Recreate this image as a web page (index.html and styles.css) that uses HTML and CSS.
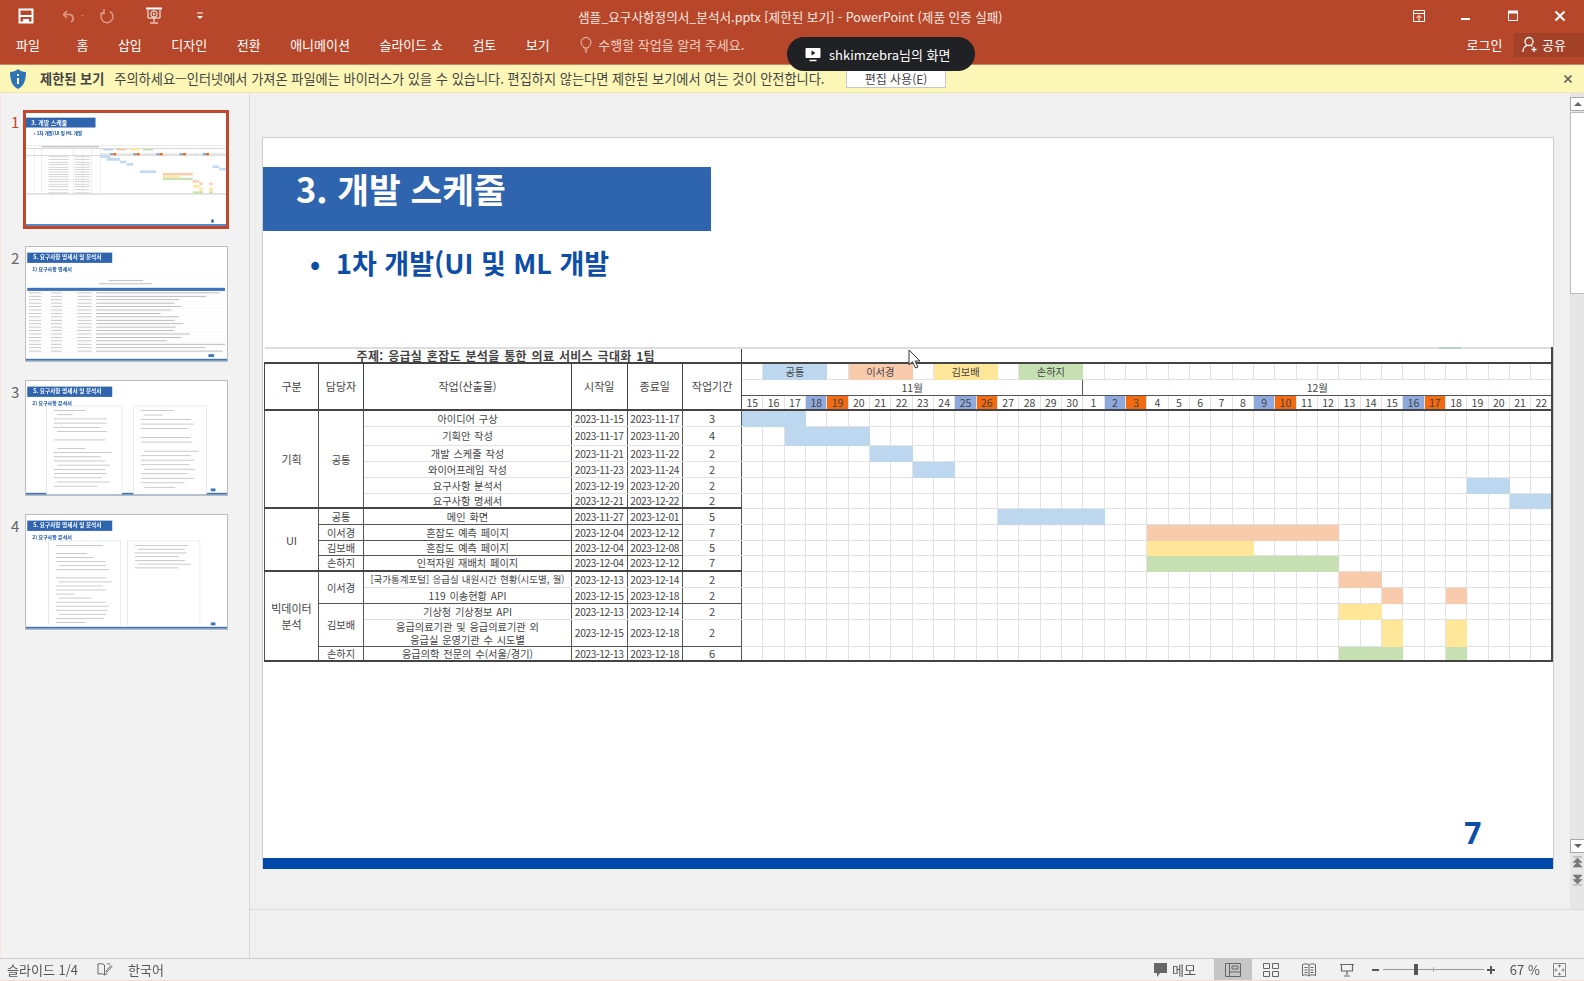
FILE: index.html
```html
<!DOCTYPE html>
<html lang="ko">
<head>
<meta charset="UTF-8">
<title>샘플_요구사항정의서_분석서.pptx</title>
<link rel="stylesheet" href="styles.css">
</head>
<body>
<div class="app">
    <header class="ribbon">
        <div class="title-bar">
            <div class="quick-tools">
                <svg class="qt-save" width="16" height="16" viewBox="0 0 16 16"><path d="M1.500 1.500h13v13h-13z" fill="none" stroke="#fff" stroke-width="2"/><path d="M2 8h12" stroke="#fff" stroke-width="2"/><path d="M5 11h6v3H5z" fill="#fff"/></svg>
                <svg class="qt-undo" width="26" height="16" viewBox="0 0 26 16"><path d="M5 3 1.500 6.500 5 10M2 6.500h6a4 4 0 0 1 1 7.500" fill="none" stroke="#dd9a85" stroke-width="1.600"/><path d="m19 7 3 0-1.500 2z" fill="#cf8068"/></svg>
                <svg class="qt-redo" width="16" height="16" viewBox="0 0 16 16"><path d="M11 3.500A6 6 0 1 1 5 3.500M5 1v4.500H1" fill="none" stroke="#dd9a85" stroke-width="1.500"/></svg>
                <svg class="qt-show" width="18" height="18" viewBox="0 0 18 18"><path d="M1 1.500h16" stroke="#fff" stroke-width="2"/><path d="M3 3v8h12V3" fill="none" stroke="#fff"/><circle cx="9" cy="7" r="3.200" fill="none" stroke="#fff"/><path d="m8 5.500 2.500 1.500L8 8.500z" fill="#fff"/><path d="M9 11v4M5 16h8" stroke="#fff"/></svg>
                <svg class="qt-more" width="8" height="8" viewBox="0 0 8 8"><path d="M1 1h6" stroke="#fff"/><path d="M1 4h6L4 7z" fill="#fff"/></svg>
            </div>
            <div class="doc-title">샘플_요구사항정의서_분석서.pptx [제한된 보기] - PowerPoint (제품 인증 실패)</div>
            <div class="win-tools">
                <svg width="14" height="14" viewBox="0 0 14 14"><path d="M1.500 1.500h11v11h-11zM1.500 4.500h11" fill="none" stroke="#fff"/><path d="M7 12V6.500M4.500 9 7 6.500 9.500 9" fill="none" stroke="#fff"/></svg>
                <svg width="14" height="14" viewBox="0 0 14 14"><path d="M2 10h9" stroke="#fff" stroke-width="2"/></svg>
                <svg width="14" height="14" viewBox="0 0 14 14"><path d="M2.500 2.500h9v9h-9z" fill="none" stroke="#fff"/><path d="M2 3h10" stroke="#fff" stroke-width="3"/></svg>
                <svg width="14" height="14" viewBox="0 0 14 14"><path d="m2.500 2.500 9 9M11.500 2.500l-9 9" stroke="#fff" stroke-width="2"/></svg>
            </div>
        </div>
        <nav class="tab-bar">
            <span class="tab tab-file">파일</span>
            <span class="tab">홈</span>
            <span class="tab">삽입</span>
            <span class="tab">디자인</span>
            <span class="tab">전환</span>
            <span class="tab">애니메이션</span>
            <span class="tab">슬라이드 쇼</span>
            <span class="tab">검토</span>
            <span class="tab">보기</span>
            <span class="tell-me">
                <svg width="12" height="16" viewBox="0 0 12 16"><path d="M4 11C3.500 9 1 8 1 5.500a5 5 0 0 1 10 0C11 8 8.500 9 8 11zM4.500 13h3M5 15h2" fill="none" stroke="#f0cfc4"/></svg>
                수행할 작업을 알려 주세요.
            </span>
            <span class="login">로그인</span>
            <span class="share">
                <svg width="16" height="17" viewBox="0 0 16 17"><circle cx="7" cy="5.500" r="4" fill="none" stroke="#fff" stroke-width="1.300"/><path d="M1 16c0-4 2-6 4-6.500M9 9.500l1.500 1" fill="none" stroke="#fff" stroke-width="1.300"/><path d="M12 11v5M9.500 13.500h5" stroke="#fff" stroke-width="1.300"/></svg>
                공유
            </span>
        </nav>
    </header>

    <div class="message-bar">
        <svg class="shield" width="18" height="22" viewBox="0 0 18 22"><path d="M9 1c2 2 5 3 8 3 0 8-2 14-8 17C3 18 1 12 1 4c3 0 6-1 8-3z" fill="#2f74b5"/><path d="M9 6v1.800M9 10v6" stroke="#fff" stroke-width="2"/></svg>
        <strong class="msg-title">제한된 보기</strong>
        <span class="msg-text">주의하세요—인터넷에서 가져온 파일에는 바이러스가 있을 수 있습니다. 편집하지 않는다면 제한된 보기에서 여는 것이 안전합니다.</span>
        <button class="msg-button">편집 사용(E)</button>
        <svg class="msg-close" width="10" height="10" viewBox="0 0 10 10"><path d="m1.500 1.500 7 7M8.500 1.500l-7 7" stroke="#555" stroke-width="1.600"/></svg>
    </div>

    <main class="workspace">
        <aside class="thumbs">
            <div class="thumb thumb-active"><span class="thumb-no">1</span><div class="thumb-frame" id="thumb1"></div></div>
            <div class="thumb"><span class="thumb-no">2</span><div class="thumb-frame" id="thumb2"></div></div>
            <div class="thumb"><span class="thumb-no">3</span><div class="thumb-frame" id="thumb3"></div></div>
            <div class="thumb"><span class="thumb-no">4</span><div class="thumb-frame" id="thumb4"></div></div>
        </aside>
        <section class="editor">
            <div class="slide-area">
                <div class="slide-scroll">
                    <article class="slide">
                        <h1 class="slide-title">3. 개발 스케줄</h1>
                        <p class="slide-bullet"><span class="bullet-dot">•</span>1차 개발(UI 및 ML 개발</p>
                        <table class="gantt">
                            <colgroup id="gantt-cols"></colgroup>
                            <thead id="gantt-head"></thead>
                            <tbody id="gantt-body"></tbody>
                        </table>
                        <div class="page-no">7</div>
                        <div class="slide-foot"></div>
                    </article>
                </div>
                <div class="scrollbar">
                    <span class="sb-btn"><i class="tri-up"></i></span>
                    <span class="sb-thumb"></span>
                    <span class="sb-track"></span>
                    <span class="sb-btn sb-down"><i class="tri-down"></i></span>
                    <svg class="sb-page" width="11" height="12" viewBox="0 0 11 12"><path d="M1 1h9M5.500 2 1 6.500h9zM5.500 6 1 11h9z" fill="#777" stroke="#777" stroke-width=".6"/></svg>
                    <svg class="sb-page" width="11" height="12" viewBox="0 0 11 12"><path d="M1 11h9M5.500 10 1 5.500h9zM5.500 6 1 1h9z" fill="#777" stroke="#777" stroke-width=".6"/></svg>
                </div>
            </div>
            <div class="notes-strip"></div>
        </section>
    </main>

    <footer class="status-bar">
        <span class="st-slide">슬라이드 1/4</span>
        <svg class="st-check" width="16" height="15" viewBox="0 0 16 15"><path d="M7.500 3C6 1.500 3 1.500 1 2v10c2-.5 5-.5 6.500 1 .8-.8 2-1.200 3-1.300M7.500 3v10M10 2c1-.3 2-.3 3 0" fill="none" stroke="#666"/><path d="m9.500 8.500 4.500-5 1 1-4.500 5-1.500.5z" fill="none" stroke="#666"/></svg>
        <span class="st-lang">한국어</span>
        <svg class="st-memo" width="13" height="14" viewBox="0 0 13 14"><path d="M0 0h13v10H6l-3 4v-4H0z" fill="#666"/></svg>
        <span class="st-memo-text">메모</span>
        <span class="view-btn view-active"><svg width="16" height="14" viewBox="0 0 16 14"><path d="M.500.500h15v13H.500zM4.500.500v13M4.500 9h11" fill="none" stroke="#666"/><path d="M7 3h6v3H7z" fill="none" stroke="#666"/></svg></span>
        <span class="view-btn"><svg width="16" height="14" viewBox="0 0 16 14"><path d="M.500.500h6v5h-6zM9.500.500h6v5h-6zM.500 8.500h6v5h-6zM9.500 8.500h6v5h-6z" fill="none" stroke="#666"/></svg></span>
        <span class="view-btn"><svg width="14" height="14" viewBox="0 0 14 14"><path d="M.500 1.500C3 .500 5 .500 7 2c2-1.500 4-1.500 6.500-.500v11C11 11.500 9 11.500 7 13c-2-1.500-4-1.500-6.500-.500zM7 2v11M2.500 4.500h3M2.500 7h3M2.500 9.500h3M8.500 4.500h3M8.500 7h3M8.500 9.500h3" fill="none" stroke="#666"/></svg></span>
        <span class="view-btn"><svg width="14" height="14" viewBox="0 0 14 14"><path d="M0 1.500h14M1.500 2v6h11V2M7 8v4M4 13h6" fill="none" stroke="#666" stroke-width="1.200"/></svg></span>
        <div class="zoom-ctl">
            <span class="zoom-minus"></span>
            <div class="zoom-track"><span class="zoom-tick"></span><span class="zoom-handle"></span></div>
            <span class="zoom-plus"></span>
        </div>
        <span class="zoom-value">67 %</span>
        <svg class="st-fit" width="13" height="14" viewBox="0 0 13 14"><path d="M.500.500h12v13H.500z" fill="none" stroke="#888"/><path d="M6.500 2v2.500M5 3l1.500-1L8 3M6.500 12V9.500M5 11l1.500 1L8 11M2 7h2.500M3 5.500 2 7l1 1.500M11 7H8.500M10 5.500 11 7l-1 1.500" fill="none" stroke="#666" stroke-width=".8"/></svg>
    </footer>

    <div class="share-pill">
        <svg width="16" height="15" viewBox="0 0 16 15"><path d="M1.500 1h13a1 1 0 0 1 1 1v8a1 1 0 0 1-1 1h-13a1 1 0 0 1-1-1V2a1 1 0 0 1 1-1z" fill="#fff"/><path d="m6.500 3.500 4 2.500-4 2.500z" fill="#202124"/><path d="M4.500 13.500h7" stroke="#fff" stroke-width="1.500"/></svg>
        <span>shkimzebra님의 화면</span>
    </div>
    <svg class="pointer" width="14" height="20" viewBox="0 0 14 20"><path d="M1 1v15l3.500-3.200L7.500 19l2.500-1-3-6h5z" fill="#fff" stroke="#333"/></svg>
</div>
<script src="script.js"></script>
</body>
</html>
```

FILE: styles.css
```css
* {
    box-sizing: border-box;
}
html, body {
    margin: 0;
    padding: 0;
    height: 100%;
    overflow: hidden;
}
body {
    font-family: "Noto Sans CJK KR", "Noto Sans", sans-serif;
    color: #444;
    background-color: #f0f0f0;
}
.app {
    position: relative;
    display: flex;
    flex-direction: column;
    width: 1584px;
    height: 981px;
    filter: blur(0.4px);
}

/* ribbon */
.ribbon {
    height: 65px;
    background-color: #b7472a;
    color: #fff;
    border-bottom: 1px solid #c9836a;
}
.title-bar {
    position: relative;
    display: flex;
    align-items: center;
    height: 32px;
}
.quick-tools {
    display: flex;
    align-items: center;
    padding-left: 18px;
}
.qt-undo {
    margin-left: 28px;
}
.qt-redo {
    margin-left: 11px;
}
.qt-show {
    margin-left: 30px;
}
.qt-more {
    margin-left: 33px;
}
.doc-title {
    position: absolute;
    left: 578px;
    width: 424px;
    font-size: 12.600px;
    white-space: nowrap;
    color: #fbe9e3;
}
.win-tools {
    display: flex;
    gap: 33px;
    margin-left: auto;
    padding-right: 17px;
}
.tab-bar {
    display: flex;
    align-items: center;
    gap: 29.500px;
    height: 25px;
    padding-left: 16px;
    font-size: 13px;
}
.tab-file {
    margin-right: 7px;
}
.tell-me {
    display: flex;
    align-items: center;
    gap: 6px;
    margin-left: 1px;
    color: #f0cfc4;
}
.login {
    margin-left: auto;
}
.share {
    display: flex;
    align-items: center;
    gap: 4px;
    width: 70px;
    height: 24px;
    margin-left: -18px;
    padding-left: 8px;
    background-color: #a24128;
}

/* yellow message */
.message-bar {
    display: flex;
    align-items: center;
    height: 28px;
    padding-left: 9px;
    background-color: #fcf7b6;
    border-bottom: 1px solid #eee9a8;
    font-size: 13.200px;
    color: #444;
}
.msg-title {
    margin-left: 13px;
    font-weight: 700;
}
.msg-text {
    margin-left: 10px;
}
.msg-button {
    width: 100px;
    height: 19px;
    margin-left: auto;
    padding: 0;
    font-family: inherit;
    font-size: 12px;
    color: #444;
    background-color: #fff;
    border: 1px solid #c8c8c8;
}
.msg-close {
    margin-left: 617px;
    margin-right: 11px;
}

/* thumbnails */
.workspace {
    flex: 1;
    display: flex;
    min-height: 0;
}
.thumbs {
    display: flex;
    flex-direction: column;
    gap: 18px;
    width: 250px;
    padding: 17px 21px 0 0;
    background-color: #f2f2f2;
    border-left: 1px solid #f8e4de;
    border-right: 1px solid #d8d8d8;
}
.thumb {
    position: relative;
    display: flex;
    justify-content: flex-end;
    height: 116px;
}
.thumb-no {
    position: absolute;
    left: 10px;
    top: 1px;
    font-size: 15px;
    color: #666;
}
.thumb-frame {
    width: 203px;
    height: 116px;
    background-color: #fff;
    border: 1px solid #bcbcbc;
}
.thumb-frame svg {
    display: block;
    width: 100%;
    height: 100%;
    filter: blur(0.5px);
}
.thumb-active {
    height: 117px;
    margin-bottom: 1px;
}
.thumb-active .thumb-no {
    color: #c0492b;
}
.thumb-active .thumb-frame {
    width: 206px;
    height: 119px;
    margin-right: -1px;
    border: 3px solid #c0492b;
}

/* editor */
.editor {
    flex: 1;
    display: flex;
    flex-direction: column;
    min-width: 0;
}
.slide-area {
    flex: 1;
    display: flex;
    min-height: 0;
    background-color: #f0f0f0;
}
.slide-scroll {
    flex: 1;
    padding: 44px 16px 0 12px;
}
.slide {
    position: relative;
    display: flex;
    flex-direction: column;
    height: 732px;
    background-color: #fff;
    border: 1px solid #cfcfcf;
    border-bottom: 0;
}
.slide-title {
    display: flex;
    align-items: center;
    width: 448px;
    height: 64px;
    margin: 29px 0 0;
    padding: 0 0 22px 33px;
    font-size: 34.500px;
    line-height: 42px;
    font-weight: 700;
    color: #fff;
    background-color: #2f65ae;
}
.slide-bullet {
    margin: 13px 0 0 47px;
    font-size: 27px;
    line-height: 38px;
    font-weight: 700;
    color: #0d4ea6;
}
.bullet-dot {
    display: inline-block;
    width: 26px;
}
.page-no {
    align-self: flex-end;
    margin-top: auto;
    margin-right: 72px;
    font-family: "Open Sans", sans-serif;
    font-size: 30px;
    line-height: 40px;
    font-weight: 700;
    color: #0d4ea6;
}
.slide-foot {
    height: 11px;
    margin-top: 5px;
    background-color: #0048aa;
}

/* schedule table */
.sat {
    background-color: #8ea9db;
}
.sun {
    background-color: #f26a11;
}
.c-blue {
    background-color: #bdd7ee;
}
.c-orange {
    background-color: #f8cbad;
}
.c-yellow {
    background-color: #ffe699;
}
.c-green {
    background-color: #c6e0b4;
}
.gantt {
    table-layout: fixed;
    width: 1288px;
    margin: 65px 0 0 1px;
    border-collapse: collapse;
    font-size: 10.200px;
    word-spacing: 1px;
    color: #444;
}
.gantt th, .gantt td {
    padding: 0;
    overflow: hidden;
    text-align: center;
    font-weight: 400;
    white-space: nowrap;
    border: 1px solid #e2e2e2;
    line-height: 11px;
}
.gantt thead th {
    font-size: 11px;
}
.gantt .sheet-title {
    position: relative;
    height: 15px;
    padding-left: 6px;
    font-size: 12px;
    font-weight: 700;
    letter-spacing: .3px;
    border: 0;
    border-top: 2px solid #ddd;
    border-bottom: 2px solid #444;
}
.gantt .sheet-blank {
    position: relative;
    border: 0;
    border-top: 2px solid #ddd;
    border-bottom: 2px solid #444;
    border-left: 1px solid #444;
    border-right: 2px solid #444;
    overflow: visible;
}
.gantt .sheet-blank::after {
    content: "";
    position: absolute;
    left: 697px;
    top: -2px;
    width: 22px;
    height: 2px;
    background-color: #b5d5c0;
}
.gantt .legend-row td {
    height: 16px;
    border-top: 0;
}
.gantt .month-row th {
    height: 16px;
    border: 1px solid #555;
    border-left-color: #777;
    font-size: 10.500px;
}
.gantt .day-row th {
    height: 15px;
    font-size: 10.500px;
    border-bottom: 2px solid #444;
    border-top: 1px solid #555;
}
.gantt .head-left {
    border: 1px solid #444;
    border-bottom: 2px solid #444;
}
.gantt .dark {
    border-left: 1px solid #555;
    border-right: 1px solid #555;
}
.gantt .group-end {
    border-bottom: 2px solid #444;
}
.gantt .owner-end {
    border-bottom: 1px solid #555;
}
.gantt .date {
    letter-spacing: -.35px;
}
.gantt .dur {
    font-size: 11px;
}
.gantt .group {
    font-size: 11px;
    line-height: 16px;
    white-space: normal;
}
.gantt .two-line {
    white-space: normal;
    line-height: 13px;
}
.gantt .tight {
    font-size: 9.500px;
    word-spacing: .5px;
}
.gantt td.c-blue {
    border-color: #bdd7ee;
}
.gantt td.c-orange {
    border-color: #f8cbad;
}
.gantt td.c-yellow {
    border-color: #ffe699;
}
.gantt td.c-green {
    border-color: #c6e0b4;
}
.gantt th.first-day, .gantt td.first-day {
    border-left: 1px solid #555;
}
.gantt th.month-line, .gantt td.month-line {
    border-left: 1px solid #777;
}
.gantt th.last-col, .gantt td.last-col {
    border-right: 2px solid #444;
}
.gantt .last-row td {
    border-bottom: 2px solid #444;
}

/* scrollbar */
.scrollbar {
    display: flex;
    flex-direction: column;
    align-items: center;
    width: 17px;
    padding-top: 4px;
    background-color: #e6e6e6;
}
.sb-btn {
    display: flex;
    align-items: center;
    justify-content: center;
    flex: none;
    width: 15px;
    height: 14px;
    background-color: #fff;
    border: 1px solid #aaa;
}
.sb-thumb {
    flex: none;
    width: 15px;
    height: 182px;
    margin-top: 1px;
    background-color: #fff;
    border: 1px solid #bbb;
}
.sb-track {
    flex: none;
    height: 545px;
}
.tri-up, .tri-down {
    width: 0;
    height: 0;
    border-left: 4px solid transparent;
    border-right: 4px solid transparent;
}
.tri-up {
    border-bottom: 4px solid #666;
}
.tri-down {
    border-top: 4px solid #666;
}
.sb-page {
    flex: none;
    margin-top: 6px;
}
.sb-down + .sb-page {
    margin-top: 3px;
}
.notes-strip {
    flex: none;
    height: 49px;
    background-color: #f0f0f0;
    border-top: 1px solid #dcdcdc;
    margin-top: -1px;
}

/* status bar */
.status-bar {
    display: flex;
    align-items: center;
    height: 23px;
    padding-left: 7px;
    font-size: 13px;
    color: #555;
    background-color: #f1f1f1;
    border-top: 1px solid #c9c9c9;
    border-bottom: 1px solid #fbd9cc;
}
.st-check {
    margin-left: 19px;
}
.st-lang {
    margin-left: 15px;
}
.st-memo {
    margin-left: 990px;
}
.st-memo-text {
    margin-left: 5px;
    margin-right: 18px;
}
.view-btn {
    display: flex;
    align-items: center;
    justify-content: center;
    width: 38px;
    height: 21px;
}
.view-active {
    background-color: #c6c6c6;
}
.zoom-ctl {
    display: flex;
    align-items: center;
    margin-left: 6px;
}
.zoom-minus, .zoom-plus {
    position: relative;
    width: 7px;
    height: 2px;
    background-color: #555;
}
.zoom-plus {
    width: 8px;
}
.zoom-plus::after {
    content: "";
    position: absolute;
    left: 3px;
    top: -3px;
    width: 2px;
    height: 8px;
    background-color: #555;
}
.zoom-track {
    position: relative;
    width: 101px;
    height: 1px;
    margin: 0 3px 0 4px;
    background-color: #999;
}
.zoom-tick {
    position: absolute;
    left: 50px;
    top: -2px;
    width: 1px;
    height: 5px;
    background-color: #aaa;
}
.zoom-handle {
    position: absolute;
    left: 31px;
    top: -5px;
    width: 4px;
    height: 11px;
    background-color: #555;
}
.zoom-value {
    margin-left: 15px;
}
.st-fit {
    margin-left: 13px;
}

/* things lying over the rest */
.share-pill {
    position: absolute;
    left: 787px;
    top: 37px;
    display: flex;
    align-items: center;
    gap: 8px;
    width: 188px;
    height: 34px;
    padding-left: 18px;
    font-size: 13px;
    color: #fff;
    background-color: #202124;
    border-radius: 17px;
    white-space: nowrap;
}
.pointer {
    position: absolute;
    left: 908px;
    top: 349px;
}
```

FILE: script.js
```js
// schedule data: bars use day index, 0 = 11/15, 16 = 12/1
var B = "c-blue", O = "c-orange", Y = "c-yellow", G = "c-green";
var rows = [
    { h: 16, group: "기획", gspan: 6, owner: "공통", ospan: 6, task: "아이디어 구상", s: "2023-11-15", e: "2023-11-17", d: 3, c: B, bars: [0, 1, 2] },
    { h: 19, task: "기획안 작성", s: "2023-11-17", e: "2023-11-20", d: 4, c: B, bars: [2, 3, 4, 5] },
    { h: 16, task: "개발 스케줄 작성", s: "2023-11-21", e: "2023-11-22", d: 2, c: B, bars: [6, 7] },
    { h: 16, task: "와이어프레임 작성", s: "2023-11-23", e: "2023-11-24", d: 2, c: B, bars: [8, 9] },
    { h: 16, task: "요구사항 분석서", s: "2023-12-19", e: "2023-12-20", d: 2, c: B, bars: [34, 35] },
    { h: 15, task: "요구사항 명세서", s: "2023-12-21", e: "2023-12-22", d: 2, c: B, bars: [36, 37], end: 3 },
    { h: 16, group: "UI", gspan: 4, owner: "공통", ospan: 1, task: "메인 화면", s: "2023-11-27", e: "2023-12-01", d: 5, c: B, bars: [12, 13, 14, 15, 16], end: 1 },
    { h: 16, owner: "이서경", ospan: 1, task: "혼잡도 예측 페이지", s: "2023-12-04", e: "2023-12-12", d: 7, c: O, bars: [19, 20, 21, 22, 23, 24, 25, 26, 27], end: 1 },
    { h: 15, owner: "김보배", ospan: 1, task: "혼잡도 예측 페이지", s: "2023-12-04", e: "2023-12-08", d: 5, c: Y, bars: [19, 20, 21, 22, 23], end: 1 },
    { h: 16, owner: "손하지", ospan: 1, task: "인적자원 재배치 페이지", s: "2023-12-04", e: "2023-12-12", d: 7, c: G, bars: [19, 20, 21, 22, 23, 24, 25, 26, 27], end: 3 },
    { h: 16, group: "빅데이터<br>분석", gspan: 5, owner: "이서경", ospan: 2, task: "[국가통계포털] 응급실 내원시간 현황(시도별, 월)", s: "2023-12-13", e: "2023-12-14", d: 2, c: O, bars: [28, 29], tight: true },
    { h: 16, task: "119 이송현황 API", s: "2023-12-15", e: "2023-12-18", d: 2, c: O, bars: [30, 33], end: 2 },
    { h: 16, owner: "김보배", ospan: 2, task: "기상청 기상정보 API", s: "2023-12-13", e: "2023-12-14", d: 2, c: Y, bars: [28, 29] },
    { h: 25, task: "응급의료기관 및 응급의료기관 외<br>응급실 운영기관 수 시도별", s: "2023-12-15", e: "2023-12-18", d: 2, c: Y, bars: [30, 33], two: true, end: 2 },
    { h: 15, owner: "손하지", ospan: 1, task: "응급의학 전문의 수(서울/경기)", s: "2023-12-13", e: "2023-12-18", d: 6, c: G, bars: [28, 29, 30, 33], end: 3 }
];
var days = [];
for (var i = 15; i <= 30; i++) days.push(i);
for (var j = 1; j <= 22; j++) days.push(j);
var satIdx = [3, 10, 17, 24, 31], sunIdx = [4, 11, 18, 25, 32];

function buildCols() {
    var w = [54, 45, 208, 55.500, 55.500, 59], html = "";
    w.forEach(function (x) { html += '<col style="width:' + x + 'px">'; });
    for (var i = 0; i < 38; i++) html += '<col style="width:21.340px">';
    document.getElementById("gantt-cols").innerHTML = html;
}

function dayCls(i) {
    var c = "";
    if (i === 16) c += " month-line";
    if (i === 0) c += " first-day";
    if (i === 37) c += " last-col";
    return c;
}

function buildHead() {
    var html = '<tr><th class="sheet-title" colspan="6">주제: 응급실 혼잡도 분석을 통한 의료 서비스 극대화 1팀</th><td class="sheet-blank" colspan="38"></td></tr>';
    var titles = ["구분", "담당자", "작업(산출물)", "시작일", "종료일", "작업기간"];
    html += '<tr class="legend-row">';
    titles.forEach(function (t) { html += '<th class="head-left" rowspan="3">' + t + "</th>"; });
    var legend = { 1: [B, "공통"], 5: [O, "이서경"], 9: [Y, "김보배"], 13: [G, "손하지"] };
    for (var i = 0; i < 38; i++) {
        if (legend[i]) {
            html += '<td colspan="3" class="' + legend[i][0] + '">' + legend[i][1] + "</td>";
            i += 2;
        } else {
            html += '<td class="' + dayCls(i).replace(" month-line", "") + '"></td>';
        }
    }
    html += '</tr><tr class="month-row"><th colspan="16">11월</th><th colspan="22" class="last-col">12월</th></tr><tr class="day-row">';
    days.forEach(function (d, i) {
        var c = dayCls(i);
        if (satIdx.indexOf(i) >= 0) c += " sat";
        if (sunIdx.indexOf(i) >= 0) c += " sun";
        html += '<th class="' + c + '">' + d + "</th>";
    });
    document.getElementById("gantt-head").innerHTML = html + "</tr>";
}

function buildBody() {
    var html = "";
    rows.forEach(function (r, n) {
        var endCls = r.end === 3 ? " group-end" : (r.end ? " owner-end" : "");
        html += '<tr class="' + (n === rows.length - 1 ? "last-row" : "") + '" style="height:' + r.h + 'px">';
        if (r.group) html += '<td class="group dark group-end" rowspan="' + r.gspan + '">' + r.group + "</td>";
        if (r.owner) {
            var oc = "";
            if (n === 0 || r.end === 3) oc = " group-end";
            if (r.end === 1 || n === 10 || n === 12) oc = " owner-end";
            html += '<td class="dark' + oc + '" rowspan="' + r.ospan + '">' + r.owner + "</td>";
        }
        html += '<td class="dark' + endCls + (r.two ? " two-line" : "") + (r.tight ? " tight" : "") + '">' + r.task + "</td>";
        html += '<td class="dark date' + endCls + '">' + r.s + "</td>";
        html += '<td class="dark date' + endCls + '">' + r.e + "</td>";
        html += '<td class="dark dur' + (r.end === 1 ? "" : endCls) + '">' + r.d + "</td>";
        for (var i = 0; i < 38; i++) {
            var c = dayCls(i);
            if (r.bars.indexOf(i) >= 0) c += " " + r.c;
            html += '<td class="' + c + '"></td>';
        }
        html += "</tr>";
    });
    document.getElementById("gantt-body").innerHTML = html;
}

// thumbnails, drawn in slide units (1289 x 732)
function rect(x, y, w, h, fill) {
    return '<rect x="' + x + '" y="' + y + '" width="' + w + '" height="' + h + '" fill="' + fill + '"/>';
}
function label(x, y, size, fill, t) {
    return '<text x="' + x + '" y="' + y + '" font-size="' + size + '" font-weight="700" fill="' + fill + '" font-family="Noto Sans CJK KR">' + t + "</text>";
}
function svg(body) {
    return '<svg viewBox="0 0 1289 732" preserveAspectRatio="none">' + body + "</svg>";
}
function textLines(x, y, widths, step) {
    var out = "";
    widths.forEach(function (w, i) {
        if (w > 0) out += rect(x + (i % 4 === 1 ? 20 : 0), y + i * step, w, 5, "#bbb");
    });
    return out;
}

function thumbOne() {
    var b = rect(0, 30, 448, 64, "#2f65ae") + label(34, 76, 38, "#fff", "3. 개발 스케줄");
    b += label(50, 140, 29, "#0d4ea6", "• 1차 개발(UI 및 ML 개발");
    b += rect(100, 216, 370, 6, "#aaa");
    b += rect(0, 212, 1288, 2, "#bbb") + rect(0, 227, 1288, 2, "#888") + rect(0, 274, 1288, 2, "#888") + rect(0, 523, 1288, 3, "#888");
    var y = 274, colors = { "c-blue": "#bdd7ee", "c-orange": "#f8cbad", "c-yellow": "#ffe699", "c-green": "#c6e0b4" };
    [54, 99, 307, 363, 419, 477].forEach(function (x) { b += rect(x, 229, 1.500, 296, "#bbb"); });
    days.forEach(function (d, i) {
        var x = 477 + i * 21.340;
        b += rect(x, 259, 21, 15, satIdx.indexOf(i) >= 0 ? "#8ea9db" : (sunIdx.indexOf(i) >= 0 ? "#f26a11" : "#e8e8e8"));
    });
    [[1, "c-blue"], [5, "c-orange"], [9, "c-yellow"], [13, "c-green"]].forEach(function (l) {
        b += rect(477 + l[0] * 21.340, 229, 64, 14, colors[l[1]]);
    });
    rows.forEach(function (r) {
        r.bars.forEach(function (i) { b += rect(477 + i * 21.340, y, 21.500, r.h, colors[r.c]); });
        b += rect(145, y + r.h / 2, 130, 4, "#bbb") + rect(315, y + r.h / 2, 95, 4, "#bbb");
        y += r.h;
    });
    b += rect(0, 720, 1289, 11, "#3f74bb") + rect(1195, 690, 14, 20, "#0d4ea6");
    return svg(b);
}
function thumbHead(sub) {
    return rect(8, 36, 545, 66, "#2f65ae") + label(46, 80, 36, "#fff", "5. 요구사항 명세서 및 분석서") + label(40, 154, 32, "#0d4ea6", sub);
}
function thumbTwo() {
    var b = thumbHead("1) 요구사항 명세서");
    b += rect(530, 214, 220, 5, "#aaa") + rect(470, 234, 340, 5, "#aaa");
    b += rect(8, 262, 1268, 20, "#3f74bb");
    var wide = [1130, 1010, 760, 720, 780, 690, 590, 760, 720, 800, 730, 710, 860, 780, 650, 1180, 1000, 1160];
    wide.forEach(function (w, i) {
        var y = 292 + i * 22;
        b += rect(18, y, 80, 5, "#bbb") + rect(160, y, 70, 5, "#bbb") + rect(330, y, 90, 5, "#bbb") + rect(450, y, w * 0.7, 5, "#aaa");
        b += rect(8, y + 12, 1268, 1, "#e4e4e4");
    });
    b += rect(0, 718, 1289, 12, "#3f74bb") + rect(1170, 688, 36, 18, "#3f74bb");
    return svg(b);
}
function panel(x, y, w, h, lines, step) {
    return rect(x, y, w, h, "#cfd6df") + rect(x + 3, y + 3, w - 6, h, "#fff") + textLines(x + 50, y + 28, lines, step);
}
function thumbThree() {
    var b = thumbHead("2) 요구사항 분석서") + rect(0, 718, 1289, 12, "#3f74bb");
    b += panel(129, 159, 488, 566, [200, 100, 340, 340, 300, 320, 0, 330, 0, 180, 370, 300, 330, 340, 330, 340, 310, 340, 280], 27);
    b += panel(687, 159, 473, 566, [210, 120, 320, 340, 300, 0, 320, 330, 0, 350, 320, 340, 310, 330, 300, 340, 280, 200], 29);
    b += rect(1185, 690, 30, 18, "#3f74bb");
    return svg(b);
}
function thumbFour() {
    var b = thumbHead("2) 요구사항 분석서") + rect(0, 718, 1289, 12, "#3f74bb");
    b += panel(142, 165, 464, 540, [300, 0, 200, 240, 320, 300, 340, 0, 320, 340, 300, 320, 120, 210, 320, 340, 330, 300, 310, 190], 26);
    b += panel(649, 165, 468, 540, [340, 300, 330, 280, 320, 340, 280], 24);
    b += rect(1185, 690, 30, 18, "#3f74bb");
    return svg(b);
}

buildCols();
buildHead();
buildBody();
document.getElementById("thumb1").innerHTML = thumbOne();
document.getElementById("thumb2").innerHTML = thumbTwo();
document.getElementById("thumb3").innerHTML = thumbThree();
document.getElementById("thumb4").innerHTML = thumbFour();
```
